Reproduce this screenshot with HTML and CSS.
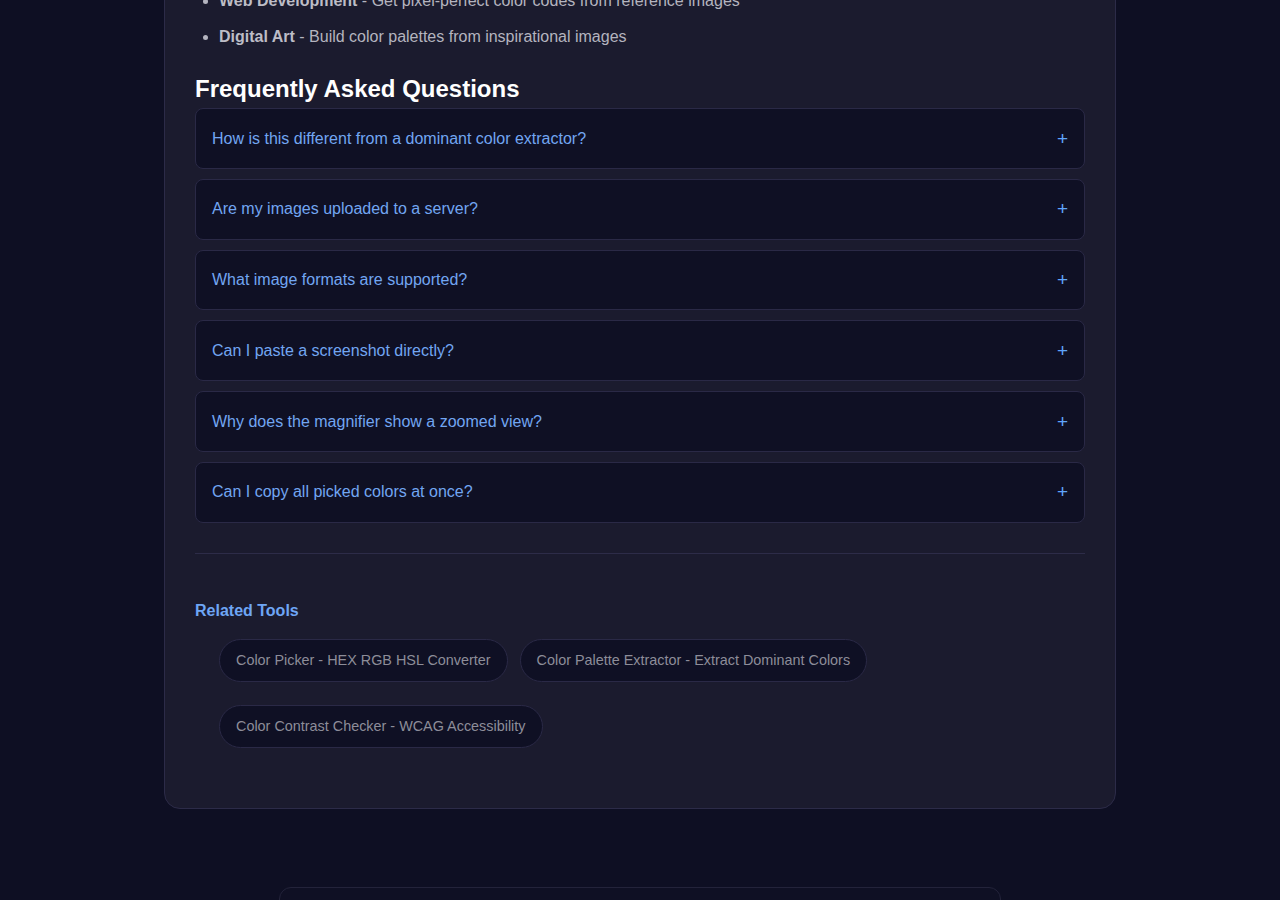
FILE: index.html
```html
<!DOCTYPE html>
<html lang="en">

<head>
    <meta charset="UTF-8">
    <meta name="viewport" content="width=device-width, initial-scale=1.0">
    <title>Color Picker From Image</title>
    <link rel="stylesheet" href="styles.css">
</head>

<body>
    <main class="page">
        <section class="content-card">
            <ul class="use-list">
                <li><strong>Web Development</strong> - Get pixel-perfect color codes from reference images</li>
                <li><strong>Digital Art</strong> - Build color palettes from inspirational images</li>
            </ul>

            <h2 class="faq-title">Frequently Asked Questions</h2>
            <div class="faq-list">
                <div class="faq-item">
                    <span class="faq-question">How is this different from a dominant color extractor?</span>
                    <span class="faq-toggle">+</span>
                </div>
                <div class="faq-item">
                    <span class="faq-question">Are my images uploaded to a server?</span>
                    <span class="faq-toggle">+</span>
                </div>
                <div class="faq-item">
                    <span class="faq-question">What image formats are supported?</span>
                    <span class="faq-toggle">+</span>
                </div>
                <div class="faq-item">
                    <span class="faq-question">Can I paste a screenshot directly?</span>
                    <span class="faq-toggle">+</span>
                </div>
                <div class="faq-item">
                    <span class="faq-question">Why does the magnifier show a zoomed view?</span>
                    <span class="faq-toggle">+</span>
                </div>
                <div class="faq-item">
                    <span class="faq-question">Can I copy all picked colors at once?</span>
                    <span class="faq-toggle">+</span>
                </div>
            </div>

            <hr class="divider">

            <h3 class="related-title">Related Tools</h3>
            <ul class="related-list">
                <li><a href="#" class="tool-chip">Color Picker - HEX RGB HSL Converter</a></li>
                <li><a href="#" class="tool-chip">Color Palette Extractor - Extract Dominant Colors</a></li>
                <li><a href="#" class="tool-chip">Color Contrast Checker - WCAG Accessibility</a></li>
            </ul>
        </section>

        <div class="footer-box"></div>
    </main>
</body>

</html>
```

FILE: styles.css
```css
body {
    margin: 0;
    background-color: #0e0f23;
    font-family: "Liberation Sans", Arial, sans-serif;
    color: #b4b4bf;
}

.page {
    width: 952px;
    margin: -43px auto 0;
}

.content-card {
    background-color: #1b1b2e;
    border: 1px solid #2c2b48;
    border-radius: 16px;
    padding: 30px;
}

.use-list {
    margin: 0 0 24px;
    padding-left: 24px;
    font-size: 16px;
    line-height: 26px;
}

.use-list li {
    margin-bottom: 10px;
}

.use-list li:last-child {
    margin-bottom: 0;
}

.use-list strong {
    color: #bdbdc6;
}

.faq-title {
    margin: 0 0 5px;
    font-size: 24px;
    line-height: 29px;
    color: #ffffff;
}

.faq-item {
    display: flex;
    justify-content: space-between;
    align-items: center;
    padding: 20.5px 16px 19.5px;
    background-color: #0f1024;
    border: 1px solid #2a2946;
    border-radius: 8px;
    font-size: 16px;
    line-height: 18.8px;
    cursor: pointer;
}

.faq-item + .faq-item {
    margin-top: 10px;
}

.faq-question {
    color: #72a6f2;
}

.faq-toggle {
    color: #60a5fa;
    font-size: 19px;
}

.divider {
    margin: 30px 0 0;
    border: none;
    border-top: 1px solid #2d2c48;
}

.related-title {
    margin: 48px 0 19px;
    font-size: 16px;
    line-height: 18px;
    color: #6ea6f5;
}

.related-list {
    list-style: none;
    margin: 0 0 30px;
    padding-left: 24px;
    display: flex;
    flex-wrap: wrap;
    column-gap: 12px;
    row-gap: 23px;
}

.tool-chip {
    display: inline-block;
    padding: 12px 16px;
    background-color: #0f1024;
    border: 1px solid #2a2946;
    border-radius: 22px;
    font-size: 14.4px;
    line-height: 17px;
    color: #8d8d99;
    text-decoration: none;
}

.footer-box {
    width: 720px;
    height: 60px;
    margin: 78px auto 0;
    border: 1px solid #23233a;
    border-radius: 12px;
    background-color: #0f1024;
}
```
